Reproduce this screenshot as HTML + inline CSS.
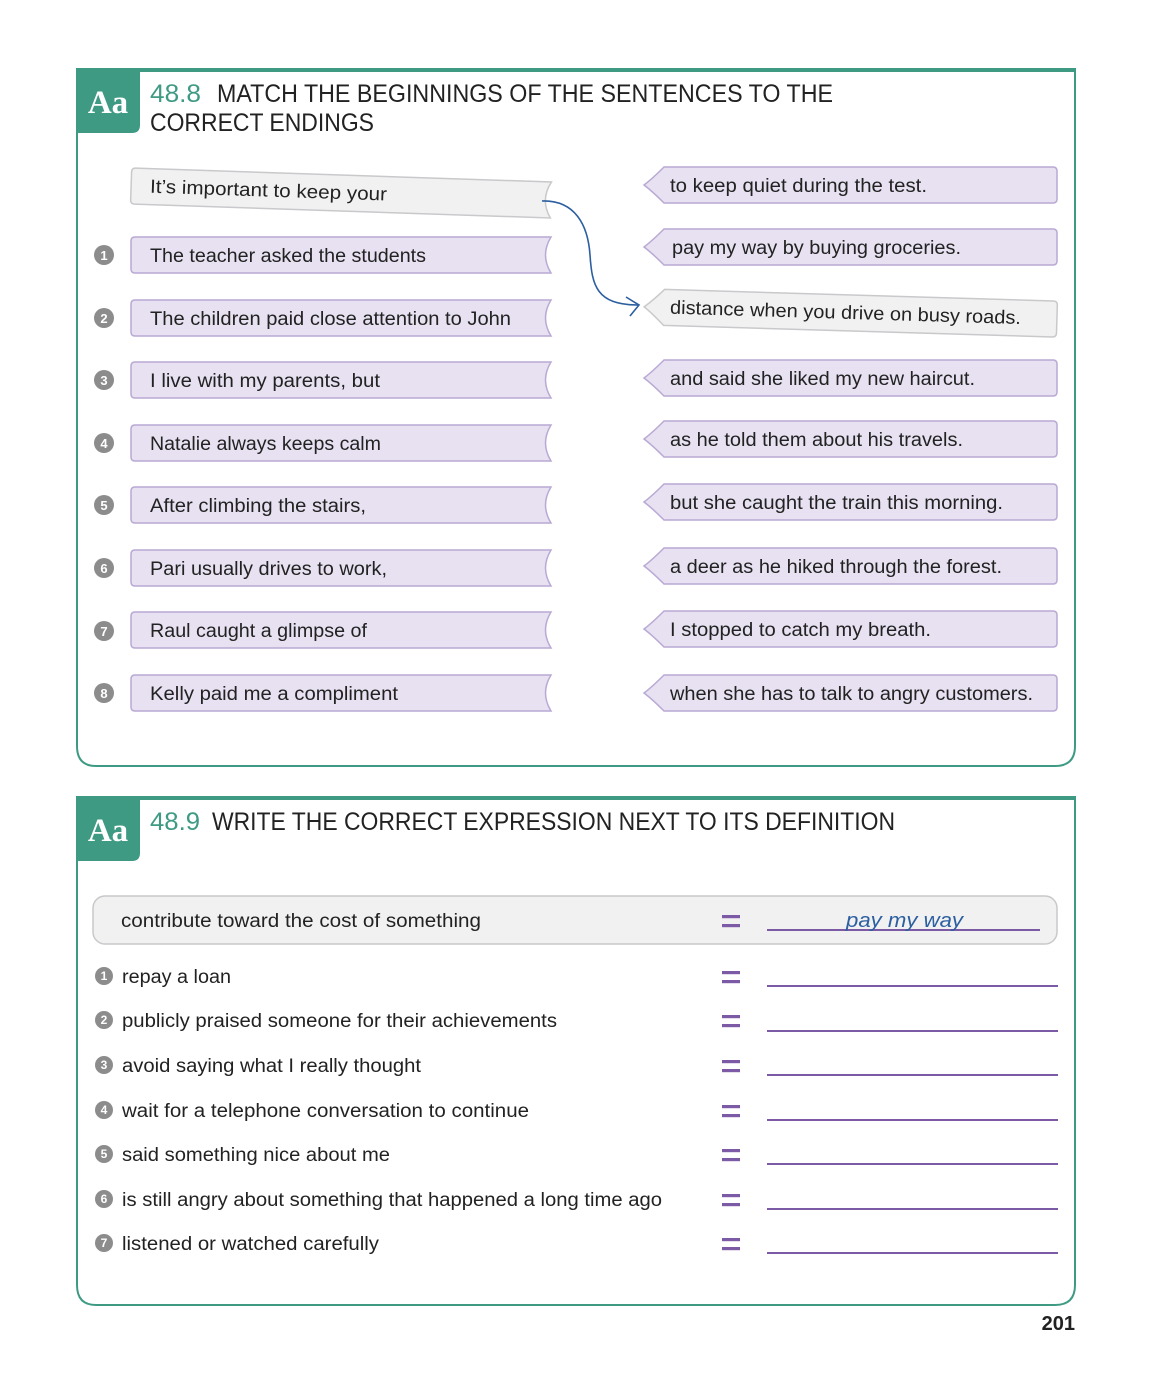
<!DOCTYPE html>
<html><head><meta charset="utf-8"><style>
html,body{margin:0;padding:0;background:#fff;}
svg{display:block;}
text{font-family:"Liberation Sans",sans-serif;}
</style></head><body>
<svg width="1152" height="1376" viewBox="0 0 1152 1376" xmlns="http://www.w3.org/2000/svg">
<defs>
<g id="eq"><rect x="0" y="-6" width="18" height="3.2" fill="#7d5aa6"/><rect x="0" y="3" width="18" height="3.2" fill="#7d5aa6"/></g>
</defs>
<!-- Panel 1 -->
<path d="M77 70 H1075 V746 Q1075 766 1055 766 H96 Q77 766 77 746 Z" fill="none" stroke="#3f9a84" stroke-width="2"/>
<rect x="76" y="68" width="1000" height="4" fill="#3f9a84"/>
<path d="M76 69 H140 V125 Q140 133 132 133 H76 Z" fill="#3f9a84"/>
<text x="108" y="113" text-anchor="middle" font-family="Liberation Serif,serif" font-weight="bold" font-size="33" fill="#fff" style="font-family:'Liberation Serif',serif">Aa</text>
<text x="150" y="102" font-size="25" fill="#3f9a84" textLength="51" lengthAdjust="spacingAndGlyphs">48.8</text>
<text x="217" y="102" font-size="25" fill="#222" textLength="616" lengthAdjust="spacingAndGlyphs">MATCH THE BEGINNINGS OF THE SENTENCES TO THE</text>
<text x="150" y="131" font-size="25" fill="#222" textLength="224" lengthAdjust="spacingAndGlyphs">CORRECT ENDINGS</text>

<!-- tilted example boxes -->
<g transform="rotate(1.9 341 193)">
<path d="M135 175 H551 Q540 193 551 211 H135 Q131 211 131 207 V179 Q131 175 135 175 Z" fill="#f1f1f2" stroke="#c9c9cc" stroke-width="1.5"/>
<text x="150" y="199" font-size="19" fill="#222" textLength="237" lengthAdjust="spacingAndGlyphs">It’s important to keep your</text>
</g>
<g transform="rotate(1.7 852 313)">
<path d="M664 295 H1053 Q1057 295 1057 299 V327 Q1057 331 1053 331 H664 Q652 319 644 313 Q652 307 664 295 Z" fill="#f1f1f2" stroke="#c9c9cc" stroke-width="1.5"/>
<text x="670" y="319" font-size="19" fill="#222" textLength="351" lengthAdjust="spacingAndGlyphs">distance when you drive on busy roads.</text>
</g>
<path d="M542 201 C575 200 588 225 590 255 C592 285 596 305 638 305" fill="none" stroke="#2c5fa0" stroke-width="1.6"/>
<path d="M626 297 L639 305 L630 316" fill="none" stroke="#2c5fa0" stroke-width="1.6"/>

<!-- left boxes -->
<g fill="#e7e1f1" stroke="#b9a9d4" stroke-width="1.5">
<path d="M135 237 H551 Q540 255 551 273 H135 Q131 273 131 269 V241 Q131 237 135 237 Z"/>
<path d="M135 300 H551 Q540 318 551 336 H135 Q131 336 131 332 V304 Q131 300 135 300 Z"/>
<path d="M135 362 H551 Q540 380 551 398 H135 Q131 398 131 394 V366 Q131 362 135 362 Z"/>
<path d="M135 425 H551 Q540 443 551 461 H135 Q131 461 131 457 V429 Q131 425 135 425 Z"/>
<path d="M135 487 H551 Q540 505 551 523 H135 Q131 523 131 519 V491 Q131 487 135 487 Z"/>
<path d="M135 550 H551 Q540 568 551 586 H135 Q131 586 131 582 V554 Q131 550 135 550 Z"/>
<path d="M135 612 H551 Q540 630 551 648 H135 Q131 648 131 644 V616 Q131 612 135 612 Z"/>
<path d="M135 675 H551 Q540 693 551 711 H135 Q131 711 131 707 V679 Q131 675 135 675 Z"/>
</g>
<g font-size="19" fill="#222">
<text x="150" y="262" textLength="276" lengthAdjust="spacingAndGlyphs">The teacher asked the students</text>
<text x="150" y="325" textLength="361" lengthAdjust="spacingAndGlyphs">The children paid close attention to John</text>
<text x="150" y="387" textLength="230" lengthAdjust="spacingAndGlyphs">I live with my parents, but</text>
<text x="150" y="450" textLength="231" lengthAdjust="spacingAndGlyphs">Natalie always keeps calm</text>
<text x="150" y="512" textLength="216" lengthAdjust="spacingAndGlyphs">After climbing the stairs,</text>
<text x="150" y="575" textLength="237" lengthAdjust="spacingAndGlyphs">Pari usually drives to work,</text>
<text x="150" y="637" textLength="217" lengthAdjust="spacingAndGlyphs">Raul caught a glimpse of</text>
<text x="150" y="700" textLength="248" lengthAdjust="spacingAndGlyphs">Kelly paid me a compliment</text>
</g>
<g fill="#8c8c8c">
<circle cx="104" cy="255" r="10"/><circle cx="104" cy="318" r="10"/><circle cx="104" cy="380" r="10"/><circle cx="104" cy="443" r="10"/>
<circle cx="104" cy="505" r="10"/><circle cx="104" cy="568" r="10"/><circle cx="104" cy="631" r="10"/><circle cx="104" cy="693" r="10"/>
</g>
<g fill="#fff" font-size="13" font-weight="bold" text-anchor="middle">
<text x="104" y="260">1</text><text x="104" y="323">2</text><text x="104" y="385">3</text><text x="104" y="448">4</text>
<text x="104" y="510">5</text><text x="104" y="573">6</text><text x="104" y="636">7</text><text x="104" y="698">8</text>
</g>

<!-- right boxes -->
<g fill="#e7e1f1" stroke="#b9a9d4" stroke-width="1.5">
<path d="M664 167 H1053 Q1057 167 1057 171 V199 Q1057 203 1053 203 H664 Q652 191 644 185 Q652 179 664 167 Z"/>
<path d="M664 229 H1053 Q1057 229 1057 233 V261 Q1057 265 1053 265 H664 Q652 253 644 247 Q652 241 664 229 Z"/>
<path d="M664 360 H1053 Q1057 360 1057 364 V392 Q1057 396 1053 396 H664 Q652 384 644 378 Q652 372 664 360 Z"/>
<path d="M664 421 H1053 Q1057 421 1057 425 V453 Q1057 457 1053 457 H664 Q652 445 644 439 Q652 433 664 421 Z"/>
<path d="M664 484 H1053 Q1057 484 1057 488 V516 Q1057 520 1053 520 H664 Q652 508 644 502 Q652 496 664 484 Z"/>
<path d="M664 548 H1053 Q1057 548 1057 552 V580 Q1057 584 1053 584 H664 Q652 572 644 566 Q652 560 664 548 Z"/>
<path d="M664 611 H1053 Q1057 611 1057 615 V643 Q1057 647 1053 647 H664 Q652 635 644 629 Q652 623 664 611 Z"/>
<path d="M664 675 H1053 Q1057 675 1057 679 V707 Q1057 711 1053 711 H664 Q652 699 644 693 Q652 687 664 675 Z"/>
</g>
<g font-size="19" fill="#222">
<text x="670" y="192" textLength="257" lengthAdjust="spacingAndGlyphs">to keep quiet during the test.</text>
<text x="672" y="254" textLength="289" lengthAdjust="spacingAndGlyphs">pay my way by buying groceries.</text>
<text x="670" y="385" textLength="305" lengthAdjust="spacingAndGlyphs">and said she liked my new haircut.</text>
<text x="670" y="446" textLength="293" lengthAdjust="spacingAndGlyphs">as he told them about his travels.</text>
<text x="670" y="509" textLength="333" lengthAdjust="spacingAndGlyphs">but she caught the train this morning.</text>
<text x="670" y="573" textLength="332" lengthAdjust="spacingAndGlyphs">a deer as he hiked through the forest.</text>
<text x="670" y="636" textLength="261" lengthAdjust="spacingAndGlyphs">I stopped to catch my breath.</text>
<text x="670" y="700" textLength="363" lengthAdjust="spacingAndGlyphs">when she has to talk to angry customers.</text>
</g>

<!-- Panel 2 -->
<path d="M77 798 H1075 V1285 Q1075 1305 1055 1305 H96 Q77 1305 77 1285 Z" fill="none" stroke="#3f9a84" stroke-width="2"/>
<rect x="76" y="796" width="1000" height="4" fill="#3f9a84"/>
<path d="M76 797 H140 V853 Q140 861 132 861 H76 Z" fill="#3f9a84"/>
<text x="108" y="841" text-anchor="middle" font-weight="bold" font-size="33" fill="#fff" style="font-family:'Liberation Serif',serif">Aa</text>
<text x="150" y="830" font-size="25" fill="#3f9a84" textLength="50" lengthAdjust="spacingAndGlyphs">48.9</text>
<text x="212" y="830" font-size="25" fill="#222" textLength="683" lengthAdjust="spacingAndGlyphs">WRITE THE CORRECT EXPRESSION NEXT TO ITS DEFINITION</text>

<rect x="93" y="896" width="964" height="48" rx="12" fill="#f1f1f2" stroke="#c9c9cc" stroke-width="1.5"/>
<text x="121" y="927" font-size="19" fill="#222" textLength="360" lengthAdjust="spacingAndGlyphs">contribute toward the cost of something</text>
<use href="#eq" x="722" y="921"/>
<rect x="767" y="929" width="273" height="2" fill="#7d5aa6"/>
<text x="846" y="927" font-size="20" fill="#2c5fa0" font-style="italic" textLength="117" lengthAdjust="spacingAndGlyphs">pay my way</text>

<g font-size="19" fill="#222">
<text x="122" y="983" textLength="109" lengthAdjust="spacingAndGlyphs">repay a loan</text>
<text x="122" y="1027" textLength="435" lengthAdjust="spacingAndGlyphs">publicly praised someone for their achievements</text>
<text x="122" y="1072" textLength="299" lengthAdjust="spacingAndGlyphs">avoid saying what I really thought</text>
<text x="122" y="1117" textLength="407" lengthAdjust="spacingAndGlyphs">wait for a telephone conversation to continue</text>
<text x="122" y="1161" textLength="268" lengthAdjust="spacingAndGlyphs">said something nice about me</text>
<text x="122" y="1206" textLength="540" lengthAdjust="spacingAndGlyphs">is still angry about something that happened a long time ago</text>
<text x="122" y="1250" textLength="257" lengthAdjust="spacingAndGlyphs">listened or watched carefully</text>
</g>
<g fill="#8c8c8c">
<circle cx="104" cy="976" r="9"/><circle cx="104" cy="1020" r="9"/><circle cx="104" cy="1065" r="9"/><circle cx="104" cy="1110" r="9"/>
<circle cx="104" cy="1154" r="9"/><circle cx="104" cy="1199" r="9"/><circle cx="104" cy="1243" r="9"/>
</g>
<g fill="#fff" font-size="12" font-weight="bold" text-anchor="middle">
<text x="104" y="980">1</text><text x="104" y="1024">2</text><text x="104" y="1069">3</text><text x="104" y="1114">4</text>
<text x="104" y="1158">5</text><text x="104" y="1203">6</text><text x="104" y="1247">7</text>
</g>
<use href="#eq" x="722" y="977"/><use href="#eq" x="722" y="1021"/><use href="#eq" x="722" y="1066"/><use href="#eq" x="722" y="1111"/>
<use href="#eq" x="722" y="1155"/><use href="#eq" x="722" y="1200"/><use href="#eq" x="722" y="1244"/>
<g fill="#7d5aa6">
<rect x="767" y="985" width="291" height="2"/><rect x="767" y="1030" width="291" height="2"/><rect x="767" y="1074" width="291" height="2"/>
<rect x="767" y="1119" width="291" height="2"/><rect x="767" y="1163" width="291" height="2"/><rect x="767" y="1208" width="291" height="2"/>
<rect x="767" y="1252" width="291" height="2"/>
</g>
<text x="1075" y="1330" text-anchor="end" font-size="20" font-weight="bold" fill="#222">201</text>
</svg>
</body></html>
